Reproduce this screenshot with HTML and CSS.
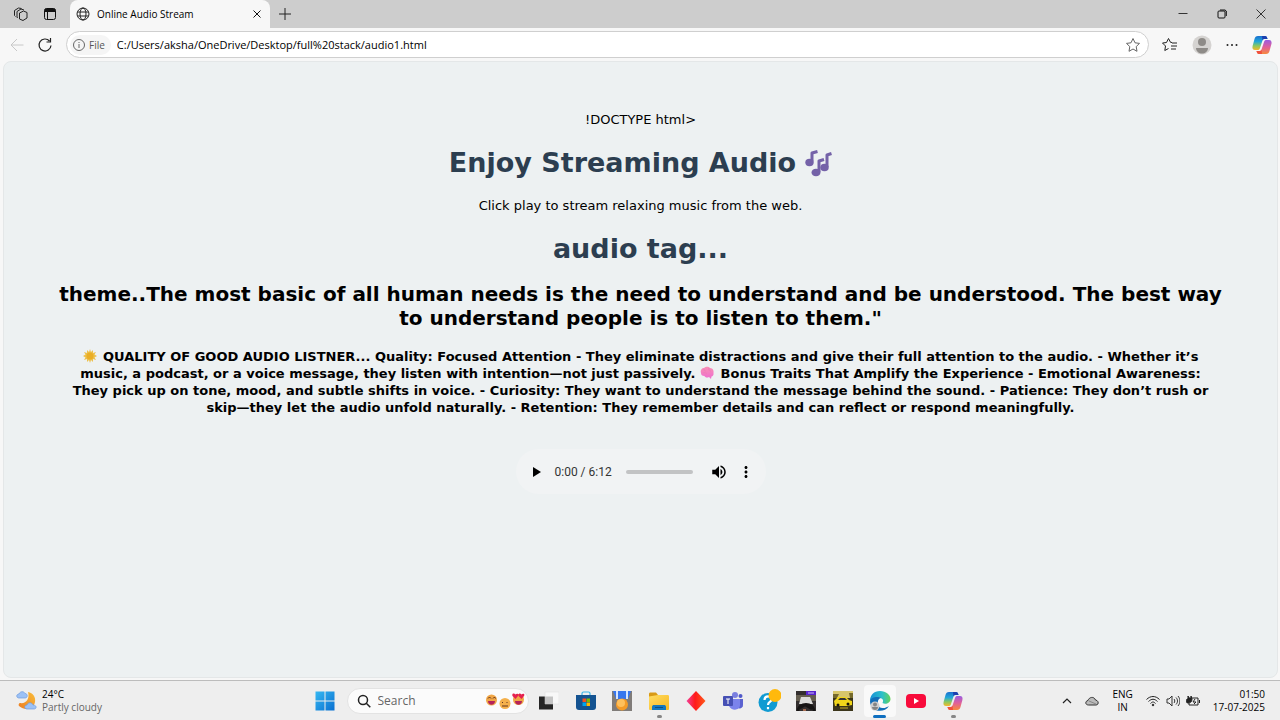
FILE: index.html
```html
<!DOCTYPE html>
<html lang="en">
<head>
<meta charset="utf-8">
<title>Online Audio Stream</title>
<link rel="stylesheet" href="styles.css">
</head>
<body>
<svg width="0" height="0" class="defs" aria-hidden="true">
  <defs>
    <linearGradient id="cpa" x1="0" y1="0" x2="0" y2="1"><stop offset="0" stop-color="#1a6fd0"/><stop offset=".4" stop-color="#22a8d8"/><stop offset=".7" stop-color="#8ac860"/><stop offset="1" stop-color="#f5b82a"/></linearGradient>
    <linearGradient id="cpb" x1="0" y1="0" x2="0" y2="1"><stop offset="0" stop-color="#9a5ce0"/><stop offset=".5" stop-color="#e0609a"/><stop offset="1" stop-color="#f78a3c"/></linearGradient>
    <linearGradient id="win" x1="0" y1="0" x2="1" y2="1"><stop offset="0" stop-color="#35b8f2"/><stop offset="1" stop-color="#0a6fd0"/></linearGradient>
    <linearGradient id="edge" x1="0" y1="0" x2="1" y2="0"><stop offset="0" stop-color="#1690d8"/><stop offset=".6" stop-color="#2cc0c8"/><stop offset="1" stop-color="#62d45a"/></linearGradient>
    <linearGradient id="dia" x1="0" y1="0" x2="1" y2="0"><stop offset="0" stop-color="#f2409a"/><stop offset=".45" stop-color="#ff1a1a"/><stop offset="1" stop-color="#ff5a1a"/></linearGradient>
    <linearGradient id="fold" x1="0" y1="0" x2="1" y2="1"><stop offset="0" stop-color="#ffdc62"/><stop offset="1" stop-color="#f8b820"/></linearGradient>
    <linearGradient id="moon" x1="1" y1="0" x2="0" y2="1"><stop offset="0" stop-color="#f9bd3a"/><stop offset="1" stop-color="#ec7d22"/></linearGradient>
    <linearGradient id="brain" x1="0" y1="0" x2="0" y2="1"><stop offset="0" stop-color="#f990b4"/><stop offset="1" stop-color="#ee6cd0"/></linearGradient>
    <symbol id="copilot" viewBox="0 0 20 20">
      <path d="M6 1h7c1.500 0 2 1 2.500 3h-3c-1.500 0-2 1-2.500 3L8 13c-.5 1.500-1 2-2.500 2H3C1 15 0 13.500.6 11L2.500 4C3 2 4 1 6 1z" fill="url(#cpa)"/>
      <path d="M14 19H7c-1.500 0-2-1-2.500-3h3c1.500 0 2-1 2.500-3l2-6c.5-1.500 1-2 2.500-2H17c2 0 3 1.500 2.400 4l-1.900 7c-.5 2-1.500 3-3.500 3z" fill="url(#cpb)"/>
      <path d="M10 1h3c1.500 0 2 1 2.500 3h-3c-1 0-1.600.4-2 1.500z" fill="#1c3fae"/>
      <path d="M10 19H7c-1.500 0-2-1-2.500-3h3c1 0 1.600-.4 2-1.500z" fill="#f0503c"/>
    </symbol>
  </defs>
</svg>

<header class="browser">
  <div class="tabstrip">
    <button class="icon-btn" aria-label="Workspaces"><svg width="16" height="16" viewBox="0 0 16 16" fill="none" stroke="#222" stroke-linejoin="round"><path d="M6.500 7 10.500 5l3.500 1.500V12l-4 2.500L6.500 13zM4.500 12 4 11V5.500L8 3l3 1M2.500 10.500 1.500 9.500V4.500l4-2.500 3 .5"/></svg></button>
    <button class="icon-btn" aria-label="Tab actions"><svg width="14" height="14" viewBox="0 0 14 14"><rect x="1.500" y="1.500" width="11" height="11" rx="2" fill="none" stroke="#111"/><path d="M1.500 5V3.500a2 2 0 0 1 2-2h7a2 2 0 0 1 2 2V5z" fill="#111"/><path d="M4.500 5v7.500" stroke="#111"/></svg></button>
    <div class="tab">
      <svg width="14" height="14" viewBox="0 0 14 14" fill="none" stroke="#222"><circle cx="7" cy="7" r="6"/><ellipse cx="7" cy="7" rx="3" ry="6"/><path d="M1.500 5h11M1.500 9h11"/></svg>
      <span class="tab-title">Online Audio Stream</span>
      <button class="icon-btn tab-close" aria-label="Close tab"><svg width="8" height="8" viewBox="0 0 8 8" stroke="#111"><path d="m.5.5 7 7m0-7-7 7"/></svg></button>
    </div>
    <button class="icon-btn" aria-label="New tab"><svg width="12" height="12" viewBox="0 0 12 12" stroke="#222"><path d="M6 0v12M0 6h12"/></svg></button>
    <div class="window-controls">
      <button class="icon-btn" aria-label="Minimize"><svg width="10" height="10" viewBox="0 0 10 10" stroke="#333"><path d="M.5 4.500h9"/></svg></button>
      <button class="icon-btn" aria-label="Restore"><svg width="10" height="10" viewBox="0 0 10 10" fill="none" stroke="#111"><rect x="1" y="2" width="7" height="7" rx="1"/><path d="M3 1h5l1.300 1v5"/></svg></button>
      <button class="icon-btn" aria-label="Close"><svg width="10" height="10" viewBox="0 0 10 10" stroke="#333"><path d="m.5.5 9 9m0-9-9 9"/></svg></button>
    </div>
  </div>
  <div class="toolbar">
    <button class="icon-btn" aria-label="Back"><svg width="14" height="14" viewBox="0 0 14 14" fill="none" stroke="#c8c8c8"><path d="M13.500 7H1M7 1 1 7l6 6"/></svg></button>
    <button class="icon-btn" aria-label="Refresh"><svg width="16" height="16" viewBox="0 0 16 16" fill="none" stroke="#222" stroke-width="1.200"><path d="M14 8.500A6 6 0 1 1 12.500 4M13.500 1v4h-4"/></svg></button>
    <div class="address">
      <span class="file-chip"><svg width="12" height="12" viewBox="0 0 12 12" fill="none" stroke="#666"><circle cx="6" cy="6" r="5.500"/><path d="M6 5v4M6 3v1"/></svg>File</span>
      <input class="url" type="text" aria-label="Address" value="C:/Users/aksha/OneDrive/Desktop/full%20stack/audio1.html">
      <button class="icon-btn" aria-label="Add to favorites"><svg width="16" height="16" viewBox="0 0 16 16" fill="none" stroke="#666" stroke-linejoin="round"><path d="m8 1.500 2 4.300 4.500.6-3.300 3.200.8 4.700L8 12l-4 2.300.8-4.700L1.500 6.400 6 5.800z"/></svg></button>
    </div>
    <div class="tools">
      <button class="icon-btn" aria-label="Favorites"><svg width="16" height="16" viewBox="0 0 16 16" fill="none" stroke="#222" stroke-linejoin="round"><path d="M10 5.500 8.500 5.300 6.500 1.500 4.500 5.500l-4 .5 3 3-.7 4.500 3.700-2M10 6h5M9 9h6M9 12h5"/></svg></button>
      <button class="icon-btn" aria-label="Profile"><svg width="20" height="20" viewBox="0 0 20 20"><circle cx="10" cy="10" r="9.500" fill="#d5d3d1"/><circle cx="10" cy="7" r="4" fill="#8e8b88"/><path d="M4 13h12c0 3.500-3 5.500-6 5.500S4 16.500 4 13z" fill="#8e8b88"/></svg></button>
      <button class="icon-btn" aria-label="Settings and more"><svg width="12" height="4" viewBox="0 0 12 4" fill="#222"><circle cx="1.500" cy="2" r="1"/><circle cx="6" cy="2" r="1"/><circle cx="10.500" cy="2" r="1"/></svg></button>
      <button class="icon-btn" aria-label="Copilot"><svg width="20" height="20"><use href="#copilot"/></svg></button>
    </div>
  </div>
</header>

<main class="page">
  <p class="plain">!DOCTYPE html&gt;</p>
  <h1>Enjoy Streaming Audio <svg class="notes" width="28" height="28" viewBox="0 0 28 28" role="img" aria-label="Musical notes"><path d="M8 12.500V4l5.500-1.500M15 23V12l5-1.500M23 18V6l4.500-1.500" fill="none" stroke="#7462a8" stroke-width="3" stroke-linejoin="round"/><g fill="#7462a8"><ellipse cx="5.500" cy="13.500" rx="4.200" ry="3.700"/><ellipse cx="12" cy="23.500" rx="4.500" ry="3.800"/><ellipse cx="20.500" cy="18.500" rx="4.200" ry="3.800"/></g></svg></h1>
  <p class="plain">Click play to stream relaxing music from the web.</p>
  <h1>audio tag...</h1>
  <h2>theme..The most basic of all human needs is the need to understand and be understood. The best way<br>to understand people is to listen to them."</h2>
  <h4><svg class="emoji" width="14" height="14" viewBox="0 0 14 14" role="img" aria-label="Glowing star"><path d="m7 0 1 3 2-2 0 3 3-1-1.500 2.500L14 7l-2.500 1.500L13 11l-3-1 0 3-2-2-1 3-1-3-2 2 0-3-3 1 1.500-2.500L0 7l2.500-1.500L1 3l3 1 0-3 2 2z" fill="#edc04a"/><circle cx="7" cy="7" r="3.500" fill="#eaae25"/></svg> QUALITY OF GOOD AUDIO LISTNER... Quality: Focused Attention - They eliminate distractions and give their full attention to the audio. - Whether it’s<br>music, a podcast, or a voice message, they listen with intention—not just passively. <svg class="emoji" width="14" height="14" viewBox="0 0 14 14" role="img" aria-label="Brain"><path d="M1 7C0 4 2 2 4 2c2-2 5-1.500 6 0 3 0 4 3 3.500 5 .5 2-1 3.500-2 3.500L11 13 9 11c-2 1-4 .5-4.500-1C2 10 1 9 1 7z" fill="url(#brain)"/><path d="M4 3c0 2 1 2 2 2M9 2c-1 2 1 3 2 3M3 7c2-1 3 0 4 1" fill="none" stroke="#ee7cb8"/></svg> Bonus Traits That Amplify the Experience - Emotional Awareness:<br>They pick up on tone, mood, and subtle shifts in voice. - Curiosity: They want to understand the message behind the sound. - Patience: They don’t rush or<br>skip—they let the audio unfold naturally. - Retention: They remember details and can reflect or respond meaningfully.</h4>
  <div class="player">
    <button class="icon-btn" aria-label="Play"><svg width="20" height="20" viewBox="0 0 20 20"><path d="M6 5v10l8-5z"/></svg></button>
    <span class="time">0:00 / 6:12</span>
    <input class="seek" type="range" min="0" max="372" value="0" aria-label="Seek">
    <button class="icon-btn" aria-label="Mute"><svg width="18" height="18" viewBox="0 0 24 24"><path d="M3 9v6h4l5 5V4L7 9H3zm13.500 3c0-1.770-1.020-3.290-2.500-4.030v8.050c1.480-.73 2.500-2.250 2.500-4.020zM14 3.230v2.060c2.890.86 5 3.540 5 6.710s-2.110 5.850-5 6.710v2.060c4.010-.91 7-4.490 7-8.770s-2.990-7.860-7-8.770z"/></svg></button>
    <button class="icon-btn" aria-label="More options"><svg width="18" height="18" viewBox="0 0 24 24"><path d="M12 8c1.100 0 2-.9 2-2s-.9-2-2-2-2 .9-2 2 .9 2 2 2zm0 2c-1.100 0-2 .9-2 2s.9 2 2 2 2-.9 2-2-.9-2-2-2zm0 6c-1.100 0-2 .9-2 2s.9 2 2 2 2-.9 2-2-.9-2-2-2z"/></svg></button>
  </div>
</main>

<footer class="taskbar">
  <button class="weather">
    <svg width="22" height="22" viewBox="0 0 22 22"><path d="M12 2c5 1 8 5 7 10-1 6-9 10-16 4-1-1 0-3 1-3 6 1 10-4 8-11z" fill="url(#moon)"/><path d="M3 8C0 8 0 4 3 4c1-3 5-3 6-.5 3 0 3 4.500 0 4.500zM11 19c-3 0-3-4 0-4 1-3 5-3 6 0 4 0 4 4 1 4z" fill="#9cc1f5" stroke="#6d9be0" stroke-width=".7"/></svg>
    <span><span class="temp">24°C</span><br><span class="sky">Partly cloudy</span></span>
  </button>
  <nav class="center">
    <button class="app" aria-label="Start"><svg width="20" height="20" viewBox="0 0 20 20" fill="url(#win)"><path d="M.5.5h9v9h-9zM10.500.5h9v9h-9zM.5 10.500h9v9h-9zM10.500 10.500h9v9h-9z"/></svg></button>
    <label class="search">
      <svg width="14" height="14" viewBox="0 0 14 14" fill="none" stroke="#222" stroke-width="1.500"><circle cx="6" cy="6" r="4.500"/><path d="m9.300 9.300 4 4"/></svg>
      <input type="text" placeholder="Search" aria-label="Search">
      <svg width="40" height="18" viewBox="0 0 40 18"><circle cx="6.500" cy="8" r="5.500" fill="#f0a646"/><path d="M3 9h7c0 5-7 5-7 0z" fill="#b5235a"/><path d="M3 6.500 4.500 5 6 6.500M8 6.500 9.500 5l1 1.500" fill="none" stroke="#63351e"/><circle cx="20" cy="11.500" r="5.500" fill="#f4b04b"/><path d="M17.500 10v1M22 10v1M17 14h6" stroke="#63351e"/><circle cx="33.500" cy="7.500" r="5.500" fill="#f0a646"/><path d="M30 9h7c0 5-7 5-7 0z" fill="#b5235a"/><path d="m30.500 7-3-3c-1-3 2-3 3-1.500 1-1.500 4-1 2.500 1.500zM36.500 7l-3-3c-.5-3 2-3 3-1.500 1-1.500 4-1 2.500 1.500z" fill="#e5204e"/></svg>
    </label>
    <div class="apps">
      <button class="app" aria-label="Task view"><svg width="20" height="20" viewBox="0 0 20 20"><path d="M0 5.500h14v13H0z" fill="#252525"/><path d="M6 1h14v12H6z" fill="#f8f8f8" stroke="#ddd" stroke-width=".5"/><path d="M6 5.500h8V13H6z" fill="#c4c4c4"/></svg></button>
      <button class="app" aria-label="Microsoft Store"><svg width="20" height="20" viewBox="0 0 20 20"><path d="M6 5V2.500C6 1.500 6.500 1 7.500 1h5c1 0 1.500.5 1.500 1.500V5" fill="none" stroke="#37b4ea" stroke-width="1.200"/><path d="M0 4h20v12c0 2-1 3-3 3H3c-2 0-3-1-3-3z" fill="#145391"/><path d="M6.500 7.500H10V11H6.500z" fill="#f25022"/><path d="M10.500 7.500H14V11h-3.500z" fill="#7fba00"/><path d="M6.500 11.500H10V15H6.500z" fill="#00a4ef"/><path d="M10.500 11.500H14V15h-3.500z" fill="#ffb900"/></svg></button>
      <button class="app" aria-label="Rewards"><svg width="20" height="20" viewBox="0 0 20 20"><path d="M0 0h20v20H0z" fill="#807c79"/><path d="M1 0h18l-3 8H4z" fill="#3676ee"/><path d="M4 0h2v8H4zM14 0h2v8h-2z" fill="#d5e5ff"/><circle cx="10" cy="13.500" r="6" fill="#f59b27"/><circle cx="9" cy="12" r="4" fill="#ffc05c"/></svg></button>
      <button class="app open" aria-label="File Explorer"><svg width="20" height="20" viewBox="0 0 20 20"><path d="M0 3c0-1 .5-1.500 1.500-1.500H7L9 4v3H0z" fill="#d99a16"/><path d="M0 5.500 9 4h9.500c1 0 1.500.5 1.500 1.500v12c0 1-.5 1.500-1.500 1.500h-17C.5 19 0 18.500 0 17.500z" fill="url(#fold)"/><path d="M3 19v-3c0-1.500 1-2 2-2h10c1 0 2 .5 2 2v3z" fill="#1378bd"/><path d="M6 16h8v1H6z" fill="#0b4d86"/></svg></button>
      <button class="app" aria-label="Diamond"><svg width="20" height="20" viewBox="0 0 20 20"><path d="m10 0 9.500 10L10 20 .5 10z" fill="url(#dia)"/></svg></button>
      <button class="app" aria-label="Microsoft Teams"><svg width="20" height="20" viewBox="0 0 20 20"><circle cx="12" cy="4" r="3" fill="#7a7fe0"/><circle cx="17.500" cy="5" r="2" fill="#5059c9"/><path d="M14 8h6v6c0 3-3 4-5 3z" fill="#5b62d0"/><path d="M6 8h11v6c0 6-9 6-11 1z" fill="#7b83eb"/><rect y="5" width="10" height="10" rx="1" fill="#4650b4"/><path d="M3 8h4M5 8v5" stroke="#fff"/></svg></button>
      <button class="app" aria-label="Get Help"><svg width="24" height="24" viewBox="0 0 24 24"><circle cx="11" cy="13.500" r="9.500" fill="#119bd2"/><path d="M7.500 11c0-5 7-4.500 7-.8 0 3-3.500 2.500-3.500 5.800M11 18v2.200" fill="none" stroke="#fff" stroke-width="2.200"/><circle cx="18" cy="6.500" r="6.500" fill="#ffb90c"/></svg></button>
      <button class="app" aria-label="Driving game"><svg width="20" height="20" viewBox="0 0 20 20"><path d="M0 0h20v20H0z" fill="#332e2e"/><path d="M0 4h20v6H0z" fill="#655e50"/><path d="M5 6h9l3 7H3z" fill="#dcdcda"/><path d="M10 0h10v4H10z" fill="#5723cd"/><path d="M12 2h6" stroke="#cdbcf9"/><path d="M2 20c0-9 16-9 16 0M4 17l5-3 7 4" fill="none" stroke="#161414" stroke-width="2.500"/><path d="M7 18h3v2H7z" fill="#a56b50"/></svg></button>
      <button class="app" aria-label="Racing game"><svg width="20" height="20" viewBox="0 0 20 20"><path d="M0 0h20v20H0z" fill="#3b351a"/><path d="M0 0h20v7H0z" fill="#d7c66b"/><path d="M0 3h6l-2 4H0zM16 2h4v5h-3z" fill="#756a2c"/><path d="m1 10 4-4h8l3 3 3 1v4l-5 1H2z" fill="#f0d51a"/><path d="m5 9 2-2h5l2 2z" fill="#333"/><circle cx="5" cy="14" r="1.500" fill="#171507"/><circle cx="15" cy="13" r="1.500" fill="#171507"/><path d="M7 17h8" stroke="#c9ae28"/></svg></button>
      <button class="app open active" aria-label="Microsoft Edge"><svg width="22" height="22" viewBox="0 0 22 22"><path d="M1 11C1 5 5 1 11 1s10.500 4 10.500 8c0 4-5 6-8 4 1-2 1-4-2-5-4-1-9 1-10.500 3z" fill="url(#edge)"/><path d="M1 11c1-4 8-5 11-3-4 0-5 9 1 10 3 .5 5-1 7-2-5 8-19 6-19-5z" fill="#126eb8"/><circle cx="6" cy="16" r="4.500" fill="#cfcfcf"/><circle cx="6" cy="14.500" r="2" fill="#858585"/><path d="M3 17h6c0 4-6 4-6 0z" fill="#858585"/></svg></button>
      <button class="app" aria-label="YouTube"><svg width="20" height="16" viewBox="0 0 20 16"><rect y="1" width="20" height="14" rx="4" fill="#f80b3b"/><path d="m8 5 5 3-5 3z" fill="#fff"/></svg></button>
      <button class="app open" aria-label="Copilot app"><svg width="20" height="20"><use href="#copilot"/></svg></button>
    </div>
  </nav>
  <div class="tray">
    <button class="icon-btn" aria-label="Hidden icons"><svg width="10" height="6" viewBox="0 0 10 6" fill="none" stroke="#222" stroke-width="1.200"><path d="m1 5 4-4 4 4"/></svg></button>
    <button class="icon-btn" aria-label="OneDrive"><svg width="14" height="10" viewBox="0 0 14 10" stroke="#333"><path d="M3.500 9C0 9 0 5 3 4.500 4 1 9 0 10.500 4 14 4.500 14 9 11 9z" fill="#bbb"/><path d="m4 5 7 3" stroke="#888"/></svg></button>
    <button class="lang">ENG<br>IN</button>
    <button class="status" aria-label="Network, sound and battery">
      <svg width="14" height="12" viewBox="0 0 14 12" fill="none" stroke="#222"><path d="M.5 4.500c4-4 9-4 13 0M2.500 6.500c3-3 6-3 9 0M4.500 8.500c2-2 3-2 5 0"/><circle cx="7" cy="10" r=".8" fill="#222"/></svg>
      <svg width="14" height="12" viewBox="0 0 14 12" fill="none" stroke="#333"><path d="M1 4h2l3-3v10L3 8H1zM8 4c1 1 1 3 0 4M10 2.500c2 2 2 5 0 7M12 1c2.500 3 2.500 7 0 10"/></svg>
      <svg width="14" height="12" viewBox="0 0 14 12" fill="none" stroke="#222"><path d="M6 3h6v7H3V8M13.500 5v3"/><path d="M1 4h1V1l1 2h2V1l1 3c0 3-2 4-4 4S0 6 1 4z" fill="#222"/><path d="m9 4-2 3h3L8 9"/></svg>
    </button>
    <button class="clock">01:50<br>17-07-2025</button>
  </div>
</footer>
</body>
</html>
```
FILE: styles.css
```css
* { box-sizing: border-box; }
body {
  margin: 0;
  min-height: 100vh;
  display: flex;
  flex-direction: column;
  background: #f7f7f7;
  color: #000;
  font-family: "Open Sans", "Noto Sans", sans-serif;
  font-size: 10px;
}
svg { display: block; flex: none; }
.defs { position: absolute; }
button, input { font: inherit; color: inherit; background: none; border: 0; padding: 0; margin: 0; outline: 0; }
.icon-btn { display: grid; place-items: center; flex: none; }

.tabstrip { display: flex; align-items: center; height: 28px; padding-left: 13px; gap: 14px; background: #cdcdcd; }
.tab { display: flex; align-items: center; gap: 7px; width: 200px; height: 28px; margin-left: -1px; padding: 0 9px 0 6px; background: #f7f7f7; border-radius: 8px 8px 0 0; }
.tab-title { flex: 1; white-space: nowrap; }
.tab + .icon-btn { margin-left: -5px; }
.window-controls { display: flex; gap: 29px; margin-left: auto; padding-right: 14px; }

.toolbar { display: flex; align-items: center; height: 33px; padding: 0 8px 0 10px; gap: 13px; }
.address { flex: 1; display: flex; align-items: center; height: 27px; padding: 0 7px 0 3px; gap: 6px; background: #fff; border: 1px solid #cfcfcf; border-radius: 14px; }
.file-chip { display: flex; align-items: center; gap: 4px; height: 20px; padding: 0 6px 0 3px; border-radius: 10px; background: #f5f5f5; color: #555; }
.url { flex: 1; min-width: 0; font-size: 11px; }
.tools { display: flex; align-items: center; gap: 14px; }

.page { flex: 1; margin: 0 2px 2px 3px; padding: 48px 50px 0; background: #edf1f2; border: 1px solid #e4e7e8; border-radius: 8px; text-align: center; font-family: Verdana, "DejaVu Sans", sans-serif; white-space: nowrap; }
.page p { margin: 0; padding-top: 2px; font-size: 13px; line-height: 16px; }
.page h1 { display: flex; justify-content: center; align-items: center; gap: 8px; margin: 18px 0 16px; font-size: 27px; line-height: 34px; color: #2c3e50; }
.page h2 { margin: 0 0 18px; font-size: 20px; line-height: 24px; }
.page h4 { margin: 0; font-size: 13px; line-height: 17px; }
.emoji { display: inline-block; vertical-align: -2px; margin-right: 2px; }

.player { display: flex; align-items: center; width: 250px; height: 45px; margin: 33px auto 0; padding: 0 11px; background: #f1f3f4; border-radius: 23px; }
.time { margin-left: 8px; font-family: Roboto, sans-serif; font-size: 12px; color: #333; }
.seek { appearance: none; flex: 1; min-width: 0; height: 4px; margin: 0 17px 0 14px; border-radius: 2px; background: #c2c3c4; }
.seek::-webkit-slider-thumb { appearance: none; width: 0; height: 0; }
.player .icon-btn + .icon-btn { margin-left: 9px; }

.taskbar { display: grid; grid-template-columns: 1fr auto 1fr; align-items: center; height: 40px; border-top: 1px solid #bcbcbc; background: #eeeeee; }
.weather { display: flex; align-items: center; gap: 4px; padding-left: 16px; text-align: left; line-height: 13px; }
.sky { color: #666; }
.center { display: flex; align-items: center; gap: 6px; }
.app { position: relative; display: grid; place-items: center; min-width: 32px; height: 32px; border-radius: 4px; }
.search { display: flex; align-items: center; width: 182px; height: 26px; padding: 0 3px 0 9px; gap: 7px; background: #fbfbfb; border: 1px solid #e3e3e3; border-radius: 13px; }
.search input { flex: 1; min-width: 0; font-size: 12px; }
.search input::placeholder { color: #666; opacity: 1; }
.apps { display: grid; grid-template-columns: repeat(12, 1fr); justify-items: center; width: 441px; margin-left: -4px; }
.active { background: #f9f9f9; }
.open::after { content: ""; position: absolute; bottom: -1px; width: 5px; height: 3px; border-radius: 2px; background: #868686; }
.active::after { width: 13px; background: #0f6fc0; }
.tray { display: flex; justify-content: flex-end; align-items: center; gap: 13px; padding-right: 15px; line-height: 13px; }
.status { display: flex; align-items: center; gap: 6px; }
.clock { text-align: right; }
```
